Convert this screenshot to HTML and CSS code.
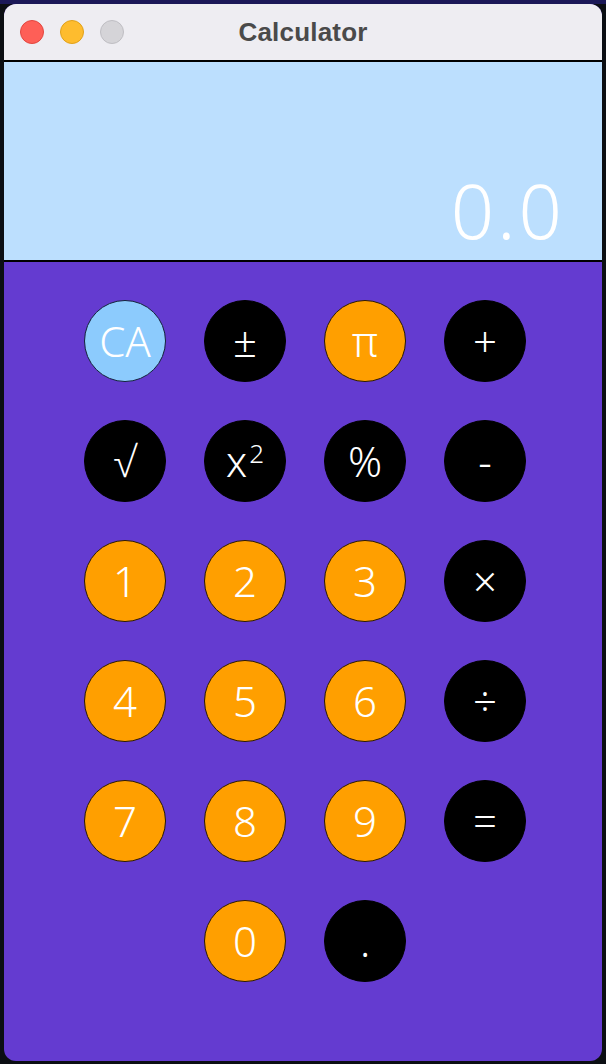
FILE: index.html
```html
<!DOCTYPE html>
<html lang="en">
<head>
<meta charset="utf-8">
<title>Calculator</title>
<link rel="stylesheet" href="styles.css">
</head>
<body>
<div class="window">
  <div class="titlebar">
    <div class="lights">
      <span class="light red"></span>
      <span class="light yellow"></span>
      <span class="light gray"></span>
    </div>
    <div class="title">Calculator</div>
    <div class="spacer"></div>
  </div>
  <div class="display"><span class="value">0.0</span></div>
  <div class="keypad">
    <button class="key blue">CA</button>
    <button class="key dark">±</button>
    <button class="key orange">π</button>
    <button class="key dark">+</button>

    <button class="key dark">√</button>
    <button class="key dark">x<sup>2</sup></button>
    <button class="key dark">%</button>
    <button class="key dark">-</button>

    <button class="key orange">1</button>
    <button class="key orange">2</button>
    <button class="key orange">3</button>
    <button class="key dark">×</button>

    <button class="key orange">4</button>
    <button class="key orange">5</button>
    <button class="key orange">6</button>
    <button class="key dark">÷</button>

    <button class="key orange">7</button>
    <button class="key orange">8</button>
    <button class="key orange">9</button>
    <button class="key dark">=</button>

    <button class="key orange zero">0</button>
    <button class="key dark">.</button>
  </div>
</div>
</body>
</html>
```

FILE: styles.css
```css
html, body {
  margin: 0;
  padding: 0;
}
body {
  width: 606px;
  height: 1064px;
  background: linear-gradient(to bottom, #1b1858 0, #1b1858 4px, #0b0e13 4px);
  padding: 4px;
  box-sizing: border-box;
  font-family: "Noto Sans", "Open Sans", sans-serif;
  overflow: hidden;
}
.window {
  width: 598px;
  height: 1057px;
  border-radius: 12px;
  overflow: hidden;
  display: flex;
  flex-direction: column;
  background: #643bd0;
}
.titlebar {
  height: 56px;
  background: #eeedf2;
  display: grid;
  grid-template-columns: 1fr auto 1fr;
  align-items: center;
  flex: none;
}
.lights {
  display: flex;
  gap: 16px;
  padding-left: 16px;
}
.light {
  width: 24px;
  height: 24px;
  border-radius: 50%;
  box-sizing: border-box;
}
.red { background: #fe5f57; border: 1px solid #e2463f; }
.yellow { background: #febc2e; border: 1px solid #e1a11a; }
.gray { background: #d5d4d8; border: 1px solid #bfbec3; }
.title {
  font-family: "Liberation Sans", Arial, sans-serif;
  font-weight: bold;
  font-size: 26px;
  color: #4a4a4a;
  letter-spacing: 0.2px;
}
.display {
  height: 202px;
  box-sizing: border-box;
  flex: none;
  background: #bcdffe;
  border-top: 2px solid #000;
  border-bottom: 2px solid #000;
  display: flex;
  justify-content: flex-end;
  align-items: flex-end;
  padding: 0 37px 12px 0;
}
.value {
  color: #ffffff;
  font-family: "Noto Sans", "Open Sans", sans-serif;
  font-weight: 300;
  font-size: 76px;
  letter-spacing: 3px;
  line-height: 1;
  display: block;
}
.keypad {
  flex: 1;
  display: grid;
  grid-template-columns: repeat(4, 82px);
  grid-auto-rows: 82px;
  column-gap: 38px;
  row-gap: 38px;
  justify-content: center;
  padding-top: 38px;
  padding-left: 4px;
}
.key {
  width: 82px;
  height: 82px;
  border-radius: 50%;
  box-sizing: border-box;
  padding: 0;
  margin: 0;
  font-family: "Noto Sans", "Open Sans", sans-serif;
  font-size: 42px;
  font-weight: 300;
  color: #ffffff;
  display: flex;
  align-items: center;
  justify-content: center;
  line-height: 1;
}
.key sup {
  font-size: 26px;
  position: relative;
  top: -8px;
  vertical-align: top;
  margin-left: 2px;
}
.orange {
  background: #ff9f00;
  border: 1px solid #2a1a00;
}
.blue {
  background: #8ccbfd;
  border: 1px solid #14213a;
}
.dark {
  background: #000000;
  border: 1px solid #000000;
}
.zero {
  grid-column-start: 2;
}
```
